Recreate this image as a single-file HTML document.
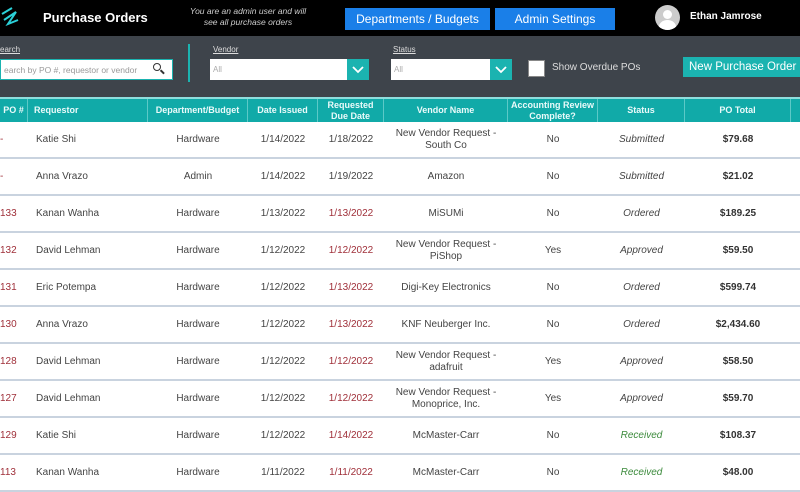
<!DOCTYPE html>
<html><head><meta charset="utf-8"><style>
*{margin:0;padding:0;box-sizing:border-box}
body{width:800px;height:480px;overflow:hidden;background:#fff;font-family:"Liberation Sans",sans-serif;position:relative}
.hdr{position:absolute;left:0;top:0;width:800px;height:36px;background:#000}
.abs{position:absolute}
.btn{position:absolute;background:#1a7fe8;color:#fff;font-size:12px;text-align:center;line-height:22px}
.flt{position:absolute;left:0;top:36px;width:800px;height:61px;background:#3e444b}
.lbl{position:absolute;color:#ddd;font-size:8px;text-decoration:underline}
.inp{position:absolute;background:#fff;height:21px;font-size:8px;color:#aaa;line-height:21px;padding-left:3px}
.dd{position:absolute;background:#1bb3b0;width:22px;height:21px}
.th{position:absolute;top:97px;height:25px;left:0;width:800px;background:#11aaa8;border-top:2px solid #8fdedd}
.th div{position:absolute;top:0;height:23px;color:#eafafa;font-size:9px;font-weight:bold;text-align:center;display:flex;align-items:center;justify-content:center;line-height:11px;border-right:1px solid #5cc9c7}
.row{position:absolute;left:0;width:800px;height:37px;border-bottom:2px solid #c9d3df}
.row div{position:absolute;top:0;height:35px;font-size:10px;color:#444;display:flex;align-items:center;justify-content:center;text-align:center;line-height:12px}
.red{color:#a0303a!important}
.it{font-style:italic}
.grn{color:#3b8a3b!important}
.b{font-weight:bold;color:#333!important}
</style></head><body>
<div class="hdr"></div>
<svg class="abs" style="left:0;top:2px" width="22" height="30"><path d="M2 12 L12 6 M4 18 L16 10 L8 22 L18 18" stroke="#2bd0d8" stroke-width="2" fill="none"/></svg>
<div class="abs" style="left:43px;top:10px;color:#fff;font-size:13px;font-weight:bold">Purchase Orders</div>
<div class="abs" style="left:172px;top:6px;width:152px;color:#ccc;font-size:8.5px;font-style:italic;text-align:center;line-height:11px">You are an admin user and will<br>see all purchase orders</div>
<div class="btn" style="left:345px;top:8px;width:145px">Departments / Budgets</div>
<div class="btn" style="left:495px;top:8px;width:120px">Admin Settings</div>
<div class="abs" style="left:655px;top:5px;width:25px;height:25px;border-radius:50%;background:#ccc;overflow:hidden"><div class="abs" style="left:8px;top:5px;width:9px;height:9px;border-radius:50%;background:#fff"></div><div class="abs" style="left:4px;top:15px;width:17px;height:14px;border-radius:50%;background:#fff"></div></div>
<div class="abs" style="left:690px;top:11px;color:#fff;font-size:10px;font-weight:bold">Ethan Jamrose</div>
<div class="flt"></div>
<div class="lbl" style="left:0;top:45px">earch</div>
<div class="inp" style="left:0;top:59px;width:173px;color:#999;border:1px solid #1bb3b0;font-size:8.5px">earch by PO #, requestor or vendor</div>
<div class="abs" style="left:153px;top:63px;width:8px;height:8px;border:1.5px solid #333;border-radius:50%"></div>
<div class="abs" style="left:160px;top:71px;width:5px;height:1.5px;background:#333;transform:rotate(45deg)"></div>
<div class="abs" style="left:188px;top:44px;width:2px;height:38px;background:#1bb3b0"></div>
<div class="lbl" style="left:213px;top:45px">Vendor</div>
<div class="inp" style="left:210px;top:59px;width:138px">All</div>
<div class="dd" style="left:347px;top:59px"><svg width="22" height="21"><path d="M6 8 L11 13 L16 8" stroke="#fff" stroke-width="1.8" fill="none"/></svg></div>
<div class="lbl" style="left:393px;top:45px">Status</div>
<div class="inp" style="left:391px;top:59px;width:100px">All</div>
<div class="dd" style="left:490px;top:59px"><svg width="22" height="21"><path d="M6 8 L11 13 L16 8" stroke="#fff" stroke-width="1.8" fill="none"/></svg></div>
<div class="abs" style="left:528px;top:60px;width:17px;height:17px;background:#fff;border:1px solid #888"></div>
<div class="abs" style="left:552px;top:62px;color:#ddd;font-size:10px">Show Overdue POs</div>
<div class="abs" style="left:683px;top:57px;width:117px;height:20px;background:#1bb3b0;color:#fff;font-size:11.5px;line-height:20px;padding-left:6px">New Purchase Order</div>
<div class="th">
<div style="left:0;width:28px">PO #</div>
<div style="left:28px;width:120px;justify-content:flex-start;padding-left:6px">Requestor</div>
<div style="left:148px;width:100px">Department/Budget</div>
<div style="left:248px;width:70px">Date Issued</div>
<div style="left:318px;width:66px">Requested<br>Due Date</div>
<div style="left:384px;width:124px">Vendor Name</div>
<div style="left:508px;width:90px">Accounting Review<br>Complete?</div>
<div style="left:598px;width:87px">Status</div>
<div style="left:685px;width:106px">PO Total</div>
</div>
<div id="rows"></div>
<script>
var d=[["-","Katie Shi","Hardware","1/14/2022","1/18/2022",0,"New Vendor Request -<br>South Co","No","Submitted","","$79.68"],
["-","Anna Vrazo","Admin","1/14/2022","1/19/2022",0,"Amazon","No","Submitted","","$21.02"],
["133","Kanan Wanha","Hardware","1/13/2022","1/13/2022",1,"MiSUMi","No","Ordered","","$189.25"],
["132","David Lehman","Hardware","1/12/2022","1/12/2022",1,"New Vendor Request -<br>PiShop","Yes","Approved","","$59.50"],
["131","Eric Potempa","Hardware","1/12/2022","1/13/2022",1,"Digi-Key Electronics","No","Ordered","","$599.74"],
["130","Anna Vrazo","Hardware","1/12/2022","1/13/2022",1,"KNF Neuberger Inc.","No","Ordered","","$2,434.60"],
["128","David Lehman","Hardware","1/12/2022","1/12/2022",1,"New Vendor Request -<br>adafruit","Yes","Approved","","$58.50"],
["127","David Lehman","Hardware","1/12/2022","1/12/2022",1,"New Vendor Request -<br>Monoprice, Inc.","Yes","Approved","","$59.70"],
["129","Katie Shi","Hardware","1/12/2022","1/14/2022",1,"McMaster-Carr","No","Received","g","$108.37"],
["113","Kanan Wanha","Hardware","1/11/2022","1/11/2022",1,"McMaster-Carr","No","Received","g","$48.00"]];
var h="";d.forEach(function(r,i){var t=122+i*37;
h+='<div class="row" style="top:'+t+'px">'+
'<div class="red" style="left:0;width:14px;justify-content:flex-start">'+r[0]+'</div>'+
'<div style="left:28px;width:120px;justify-content:flex-start;padding-left:8px">'+r[1]+'</div>'+
'<div style="left:148px;width:100px">'+r[2]+'</div>'+
'<div style="left:248px;width:70px">'+r[3]+'</div>'+
'<div class="'+(r[5]?'red':'')+'" style="left:318px;width:66px">'+r[4]+'</div>'+
'<div style="left:384px;width:124px">'+r[6]+'</div>'+
'<div style="left:508px;width:90px">'+r[7]+'</div>'+
'<div class="it '+(r[9]?'grn':'')+'" style="left:598px;width:87px">'+r[8]+'</div>'+
'<div class="b" style="left:685px;width:106px">'+r[10]+'</div></div>';});
document.getElementById("rows").innerHTML=h;
</script>
</body></html>
